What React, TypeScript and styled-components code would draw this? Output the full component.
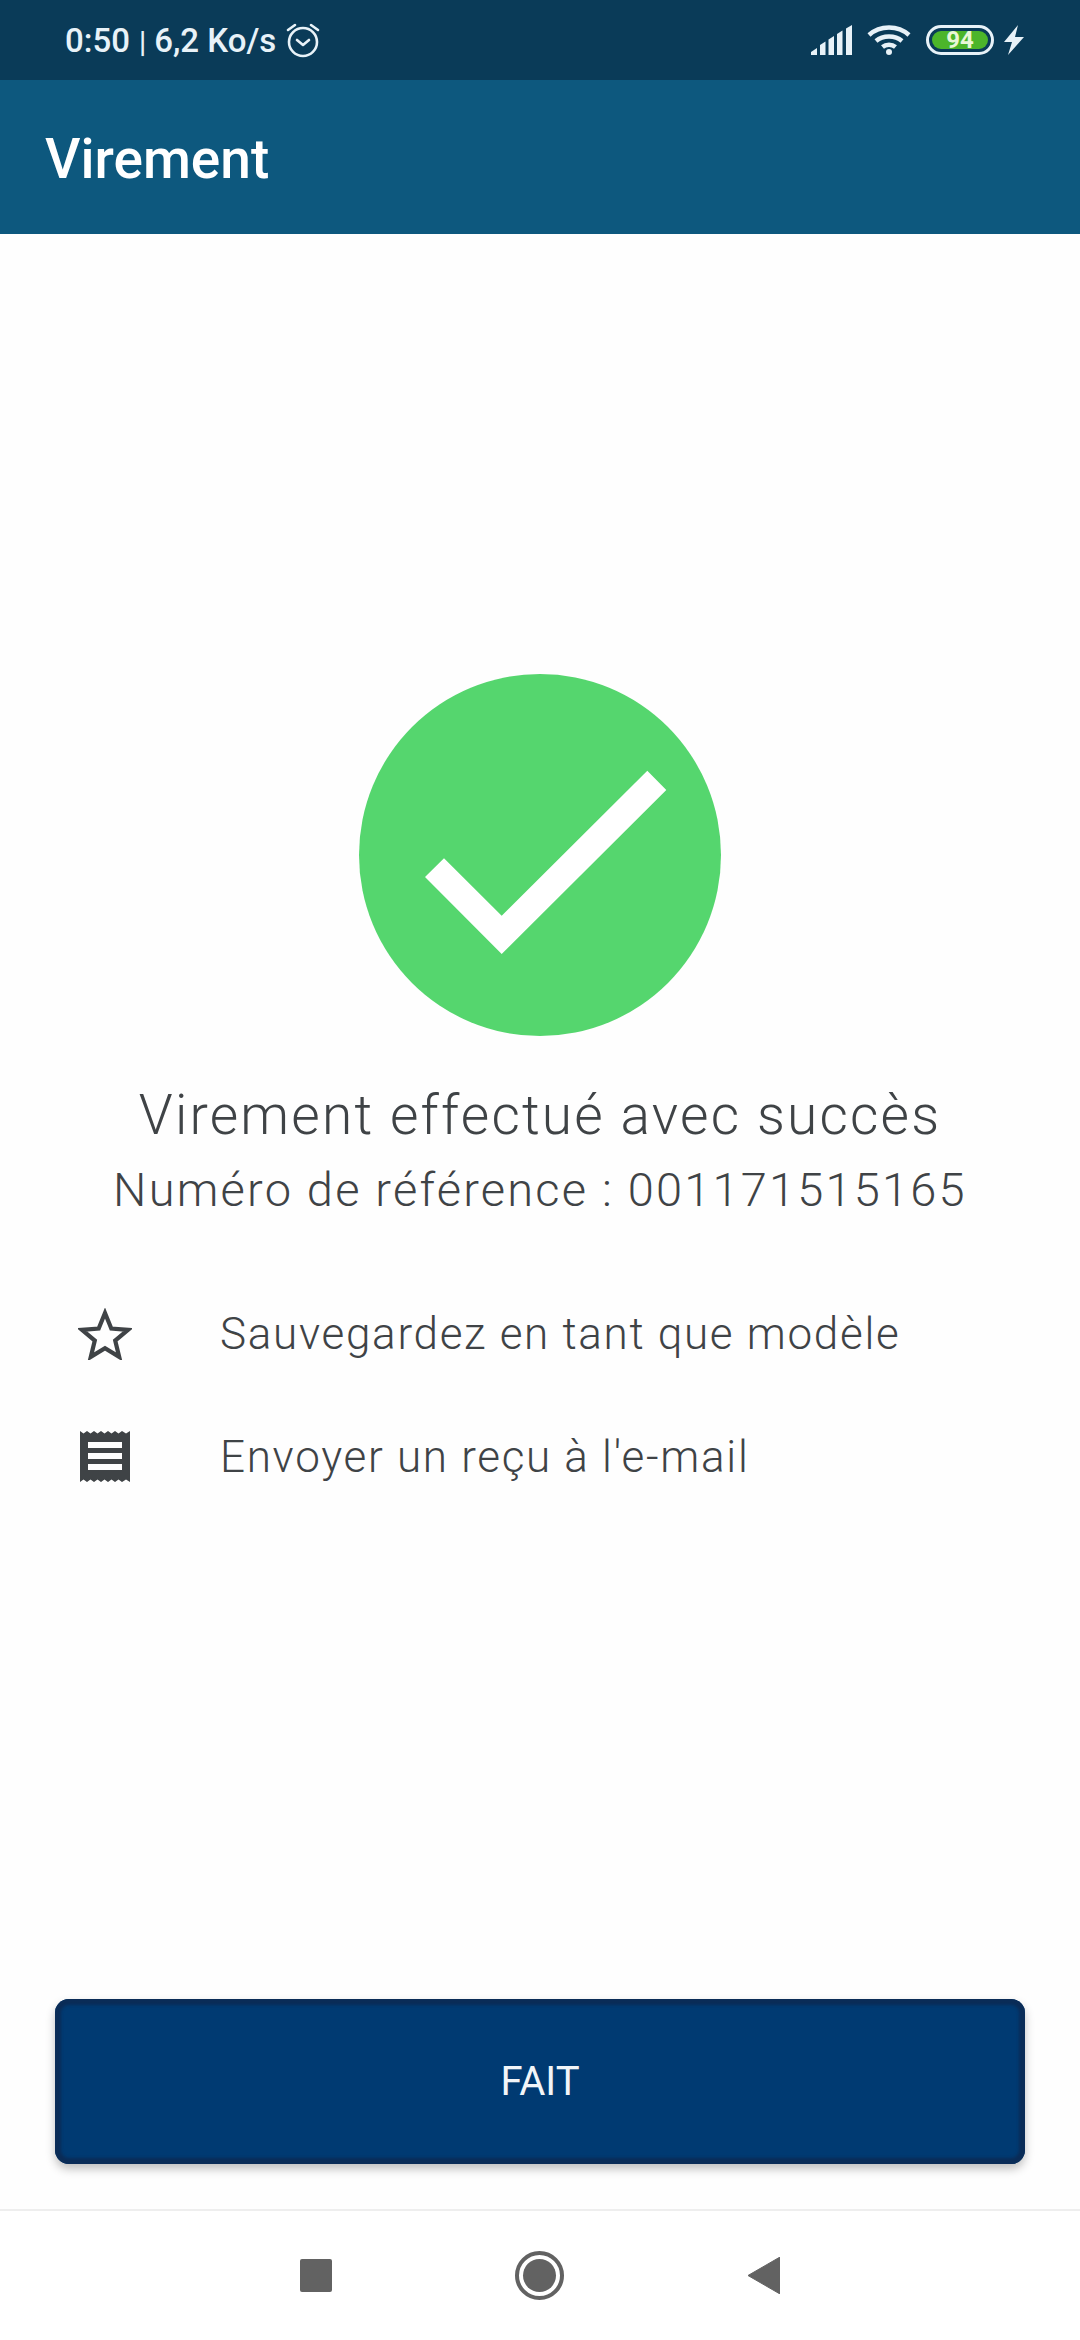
import React from "react";
import styled, { createGlobalStyle } from "styled-components";

const GlobalStyle = createGlobalStyle`
  html, body {
    margin: 0;
    padding: 0;
    background: #ffffff;
  }
`;

const Page = styled.div`
  width: 1080px;
  height: 2340px;
  display: flex;
  flex-direction: column;
  background: #fefefe;
  font-family: "Roboto", "Liberation Sans", sans-serif;
`;

const StatusBar = styled.div`
  height: 80px;
  flex: none;
  display: flex;
  align-items: center;
  justify-content: space-between;
  padding: 0 56px 0 65px;
  box-sizing: border-box;
  background: #0a3b58;
  color: #e8f2f8;
`;

const StatusLeft = styled.div`
  display: flex;
  align-items: center;
  gap: 9px;
  font-size: 33px;
  font-weight: 500;
`;

const Separator = styled.span`
  font-weight: 500;
  margin: 0 8px 0 9px;
  font-size: 29px;
`;

const StatusRight = styled.div`
  display: flex;
  align-items: center;
`;

const BatteryBox = styled.div`
  width: 68px;
  height: 30px;
  margin: 0 10px 0 15px;
  box-sizing: border-box;
  border: 3px solid #e8f2f8;
  border-radius: 15px;
  padding: 3px;
  display: flex;
`;

const BatteryFill = styled.div`
  flex: 1;
  border-radius: 9px;
  background: #4cb52a;
  color: #e9f7d8;
  font-size: 24px;
  font-weight: 700;
  line-height: 18px;
  text-align: center;
`;

const AppBar = styled.div`
  height: 154px;
  flex: none;
  box-sizing: border-box;
  display: flex;
  align-items: center;
  padding: 4px 0 0 45px;
  background: #0d587e;
  color: #ffffff;
  font-size: 55px;
  font-weight: 500;
`;

const Content = styled.div`
  flex: 1;
  display: flex;
  flex-direction: column;
  align-items: center;
  padding-top: 440px;
`;

const Heading = styled.div`
  margin-top: 46px;
  font-size: 55px;
  line-height: 66px;
  font-weight: 300;
  letter-spacing: 2.2px;
  color: #3f4346;
`;

const Reference = styled.div`
  margin-top: 14px;
  font-size: 47px;
  line-height: 56px;
  font-weight: 300;
  letter-spacing: 2.2px;
  color: #3f4346;
`;

const ActionList = styled.div`
  align-self: stretch;
  margin-top: 54px;
  display: flex;
  flex-direction: column;
`;

const ActionRow = styled.div`
  height: 123px;
  display: flex;
  align-items: center;
  padding-left: 78px;
`;

const ActionIcon = styled.div`
  width: 54px;
  display: flex;
  justify-content: center;
  margin-right: 88px;
`;

const ActionLabel = styled.span`
  font-size: 44px;
  font-weight: 300;
  letter-spacing: 1.7px;
  color: #3f4346;
`;

const Footer = styled.div`
  flex: none;
  padding: 0 55px 45px;
`;

const DoneButton = styled.button`
  width: 100%;
  height: 165px;
  border: none;
  border-radius: 14px;
  background: #003a72;
  box-shadow: inset 0 0 3px 6px #0a2c57, 0 5px 10px rgba(0, 0, 0, 0.25);
  color: #f2f5f8;
  font-family: inherit;
  font-size: 40px;
  font-weight: 400;
`;

const NavBar = styled.div`
  height: 129px;
  flex: none;
  display: flex;
  align-items: center;
  justify-content: center;
  gap: 183px;
  border-top: 2px solid #eeeeee;
  background: #ffffff;
`;

const NavSquare = styled.div`
  width: 32px;
  height: 33px;
  border-radius: 2px;
  background: #626262;
`;

const NavHome = styled.div`
  width: 49px;
  height: 49px;
  box-sizing: border-box;
  border: 4px solid #626262;
  border-radius: 50%;
  padding: 4px;
  display: flex;
`;

const NavHomeDot = styled.div`
  flex: 1;
  border-radius: 50%;
  background: #626262;
`;

const AlarmIcon = () => (
  <svg width="36" height="36" viewBox="0 0 36 36" fill="none" stroke="#e8f2f8" strokeWidth="2.6" strokeLinecap="round" strokeLinejoin="round">
    <circle cx="18" cy="20" r="14" />
    <path d="M12 18l6 5 6-5" />
    <path d="M3 8l7-5M33 8l-7-5" />
  </svg>
);

const SignalIcon = () => (
  <svg width="41" height="30" viewBox="0 0 41 30" fill="#e8f2f8">
    <path d="M0 30v-3l6-4v7z" />
    <path d="M9 30V20l5.500-3.500V30z" />
    <path d="M17.500 30V14.500L23 11v19z" />
    <path d="M26 30V9l5.500-3.500V30z" />
    <path d="M35 30V3.500L41 0v30z" />
  </svg>
);

const WifiIcon = () => (
  <svg width="44" height="30" viewBox="0 0 44 30" fill="none" stroke="#e8f2f8" strokeWidth="4.5" style={{ marginLeft: 15 }}>
    <path d="M2 10C13 0 31 0 42 10" />
    <path d="M9 16C16 10 28 10 35 16" />
    <path d="M15.500 22C19 19 25 19 28.500 22" />
    <circle cx="22" cy="27" r="3" fill="#e8f2f8" stroke="none" />
  </svg>
);

const BoltIcon = () => (
  <svg width="20" height="30" viewBox="0 0 20 30" fill="#e8f2f8">
    <path d="M14 0L0 17h8L4 30 20 12h-9z" />
  </svg>
);

const SuccessBadge = () => (
  <svg width="362" height="362" viewBox="0 0 362 362">
    <circle cx="181" cy="181" r="181" fill="#55d66e" />
    <path d="M85 184.300L66 203 142.700 280 307.300 116 288.300 96.700 142.700 241.700z" fill="#ffffff" />
  </svg>
);

const StarIcon = () => (
  <svg width="54" height="52" viewBox="0 0 54 52" fill="none" stroke="#3f4346" strokeWidth="4.200">
    <path d="M27 5l6.300 15.500 16.700 1.300-12.800 10.800 4 16.300L27 40.100 12.800 48.900l4-16.300L4 21.800l16.700-1.300z" />
  </svg>
);

const ReceiptIcon = () => (
  <svg width="50" height="55" viewBox="0 0 50 55" fill="#3f4346">
    <path d="M0 2l3.500 2.500L7 2l3.500 2.500L14 2l3.500 2.500L21 2l3.500 2.500L28 2l3.500 2.500L35 2l3.500 2.500L42 2l4 2.500L50 2v51l-4-2.500-4 2.500-3.500-2.500L35 53l-3.500-2.500L28 53l-3.500-2.500L21 53l-3.500-2.500L14 53l-3.500-2.500L7 53l-3.500-2.500L0 53z" />
    <rect x="8" y="13" width="34" height="6" fill="#ffffff" />
    <rect x="8" y="24" width="34" height="6" fill="#ffffff" />
    <rect x="8" y="35" width="34" height="6" fill="#ffffff" />
  </svg>
);

const BackIcon = () => (
  <svg width="33" height="37" viewBox="0 0 33 37" fill="#626262">
    <path d="M1 18.500L33 0v37z" stroke="#626262" strokeWidth="1" strokeLinejoin="round" />
  </svg>
);

const App: React.FC = () => {
  return (
    <Page>
      <GlobalStyle />
      <StatusBar>
        <StatusLeft>
          <span>
            0:50<Separator>|</Separator>6,2 Ko/s
          </span>
          <AlarmIcon />
        </StatusLeft>
        <StatusRight>
          <SignalIcon />
          <WifiIcon />
          <BatteryBox>
            <BatteryFill>94</BatteryFill>
          </BatteryBox>
          <BoltIcon />
        </StatusRight>
      </StatusBar>
      <AppBar>Virement</AppBar>
      <Content>
        <SuccessBadge />
        <Heading>Virement effectué avec succès</Heading>
        <Reference>Numéro de référence : 001171515165</Reference>
        <ActionList>
          <ActionRow>
            <ActionIcon>
              <StarIcon />
            </ActionIcon>
            <ActionLabel>Sauvegardez en tant que modèle</ActionLabel>
          </ActionRow>
          <ActionRow>
            <ActionIcon>
              <ReceiptIcon />
            </ActionIcon>
            <ActionLabel>Envoyer un reçu à l'e-mail</ActionLabel>
          </ActionRow>
        </ActionList>
      </Content>
      <Footer>
        <DoneButton>FAIT</DoneButton>
      </Footer>
      <NavBar>
        <NavSquare />
        <NavHome>
          <NavHomeDot />
        </NavHome>
        <BackIcon />
      </NavBar>
    </Page>
  );
};

export default App;
